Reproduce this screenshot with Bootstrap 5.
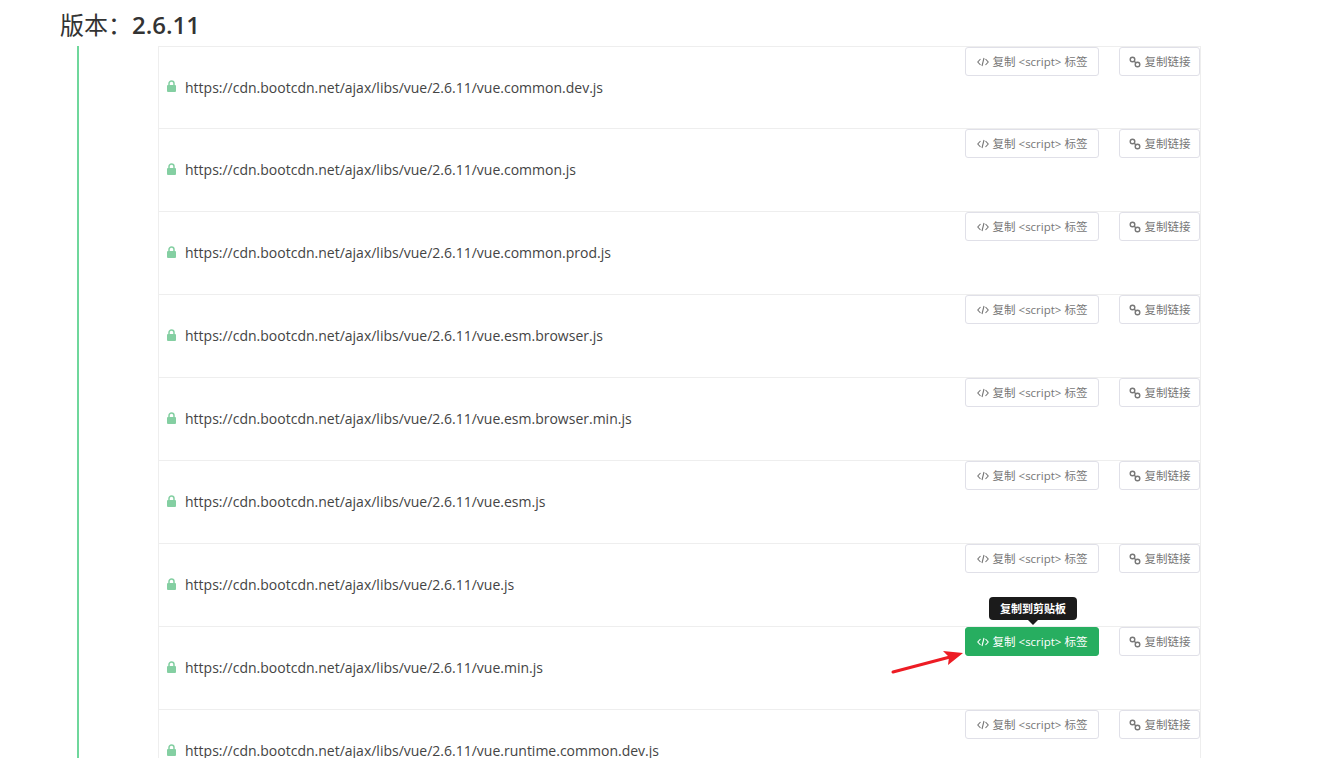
<!DOCTYPE html>
<html lang="zh-CN">
<head>
    <meta charset="UTF-8">
    <title>vue 2.6.11</title>
    <link href="https://cdn.jsdelivr.net/npm/bootstrap@5.3.0/dist/css/bootstrap.min.css" rel="stylesheet">
    <style>
        html, body { height: 758px; overflow: hidden; }
        body {
            background: #fff;
            color: #333;
            font-family: "Open Sans", "Noto Sans CJK SC", sans-serif;
        }
        .ver-title {
            margin: 0;
            padding-left: 60px;
            height: 46px;
            font-size: 24px;
            line-height: 50px;
            font-weight: 400;
            font-family: "Open Sans", "Noto Sans CJK SC", sans-serif;
        }
        .ver-title b { font-weight: 600; }
        .ver-body {
            margin-left: 77px;
            padding-left: 79px;
            border-left: 2px solid #6fd79c;
            width: 1124px;
            height: 712px;
        }
        .file-list { border-radius: 0; }
        .file-row {
            height: 83px;
            padding: 0 0 0 7px;
            border-color: #eee;
            color: #444;
            font-size: 14px;
        }
        .lock-icon { width: 11px; height: 12px; margin-right: 8px; margin-top: -3px; flex: none; }
        .url-text { line-height: 20px; }
        .copy-btn {
            --bs-btn-padding-x: 8px;
            --bs-btn-padding-y: 0;
            --bs-btn-font-size: 11.5px;
            --bs-btn-color: #777;
            --bs-btn-border-color: #e0e0e8;
            --bs-btn-border-radius: 3px;
            --bs-btn-hover-color: #777;
            --bs-btn-hover-bg: #fff;
            --bs-btn-hover-border-color: #e0e0e8;
            height: 29px;
            line-height: 27px;
            white-space: nowrap;
            position: relative;
        }
        .btn-script { width: 134px; margin-right: 20px; }
        .btn-link-copy { width: 81px; }
        .copy-btn.is-active {
            --bs-btn-color: #fff;
            --bs-btn-bg: #27ae60;
            --bs-btn-border-color: #27ae60;
            --bs-btn-hover-color: #fff;
            --bs-btn-hover-bg: #27ae60;
            --bs-btn-hover-border-color: #27ae60;
        }
        .btn-glyph { width: 12px; height: 12px; vertical-align: -2px; margin-right: 4px; }
        .copy-tip {
            position: absolute;
            left: 23px;
            top: -31px;
            width: 88px;
            height: 23px;
            line-height: 23px;
            background: #1b1b1b;
            color: #fff;
            font-size: 11px;
            font-weight: 600;
            text-align: center;
            border-radius: 4px;
        }
        .copy-tip::after {
            content: "";
            position: absolute;
            left: 39px;
            top: 23px;
            border: 5px solid transparent;
            border-top-color: #1b1b1b;
            border-bottom: 0;
        }
        .red-arrow { position: absolute; left: 888px; top: 648px; width: 80px; height: 30px; }
    </style>
</head>
<body>
    <h3 class="ver-title">版本：<b>2.6.11</b></h3>
    <div class="ver-body">
        <div class="list-group file-list" id="files"></div>
    </div>

    <svg class="red-arrow" viewBox="0 0 80 30">
        <path d="M5 24 L62 9" stroke="#ed1c24" stroke-width="3" stroke-linecap="round" fill="none"/>
        <path d="M75 5 L55 3 L61 9 L60 17 Z" fill="#ed1c24"/>
    </svg>

    <script src="https://cdn.jsdelivr.net/npm/bootstrap@5.3.0/dist/js/bootstrap.bundle.min.js"></script>
    <script>
        const files = [
            'vue.common.dev.js', 'vue.common.js', 'vue.common.prod.js', 'vue.esm.browser.js',
            'vue.esm.browser.min.js', 'vue.esm.js', 'vue.js', 'vue.min.js', 'vue.runtime.common.dev.js'
        ];
        const lock = '<svg class="lock-icon" viewBox="0 0 11 12"><path d="M3 6V3.5a2.5 2.5 0 0 1 5 0V6" fill="none" stroke="#84cfa2" stroke-width="1.5"/><rect x="1" y="5" width="9" height="7" rx="1" fill="#84cfa2"/></svg>';
        const code = '<svg class="btn-glyph" viewBox="0 0 12 12" fill="none" stroke="currentColor" stroke-width="1.1"><path d="M3.5 3 L.8 6 L3.5 9M8.5 3 L11.2 6 L8.5 9M7 2 L5 10"/></svg>';
        const chain = '<svg class="btn-glyph" viewBox="0 0 12 12" fill="none" stroke="currentColor" stroke-width="1.4"><circle cx="3.5" cy="3.5" r="2.3"/><circle cx="8.5" cy="8.5" r="2.3"/><path d="M5 5 L7 7"/></svg>';
        document.getElementById('files').innerHTML = files.map(function(name) {
            const active = name === 'vue.min.js';
            return '<div class="list-group-item file-row d-flex align-items-center">' + lock +
                '<span class="url-text">https://cdn.bootcdn.net/ajax/libs/vue/2.6.11/' + name + '</span>' +
                '<div class="ms-auto align-self-start d-flex">' +
                '<button class="btn copy-btn btn-script' + (active ? ' is-active' : '') + '">' + code +
                '复制 &lt;script&gt; 标签' + (active ? '<span class="copy-tip">复制到剪贴板</span>' : '') + '</button>' +
                '<button class="btn copy-btn btn-link-copy">' + chain + '复制链接</button>' +
                '</div></div>';
        }).join('');
    </script>
</body>
</html>
